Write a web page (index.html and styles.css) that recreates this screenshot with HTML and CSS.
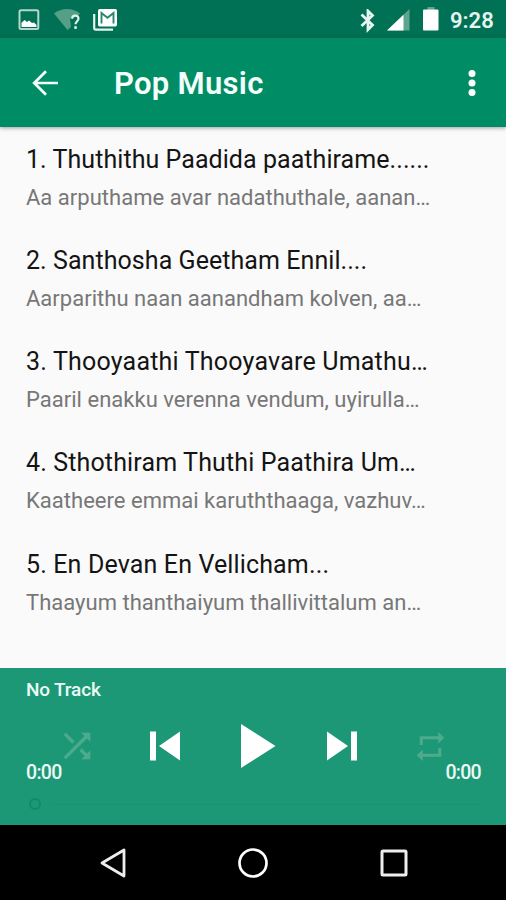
FILE: index.html
```html
<!DOCTYPE html>
<html lang="en">
<head>
<meta charset="utf-8">
<title>Pop Music</title>
<link rel="stylesheet" href="styles.css">
</head>
<body>
<div class="screen">
  <div class="status">
    <div class="status-left">
      <svg width="22" height="22" viewBox="0 0 22 22"><rect x="1.5" y="1.2" width="18.800" height="18.800" rx="1.500" fill="none" stroke="#b5d8cc" stroke-width="2"/><path d="M3.500 18v-4.200l3-2.800 2.500 2 2-1.500 3 2.500 2-.5 2.500 2.500v2z" fill="#fff"/></svg>
      <svg class="wifi" width="27" height="22" viewBox="0 0 27 22"><path d="M0 4.500C7-1.500 19-1.500 26 4.500L24 7h-5l-3 3 1 8-3.500 3z" fill="#559f86"/><path d="M18.200 9.700c0-4 6.300-4 6.300-.2 0 2.700-3 2.700-3 5.800" fill="none" stroke="#e4f2ed" stroke-width="2.200"/><rect x="20.300" y="17.200" width="2.500" height="2.700" fill="#e4f2ed"/></svg>
      <svg class="mail" width="25" height="22" viewBox="0 0 25 22"><path d="M1.200 5v14q0 1.700 1.700 1.700H20" fill="none" stroke="#e4f2ed" stroke-width="2.200"/><rect x="5" y="0" width="19" height="17.500" rx="1.700" fill="#fff"/><path d="M8.500 14.500V4l6 4.800L20.500 4v10.500" fill="none" stroke="#29866c" stroke-width="1.900"/></svg>
    </div>
    <div class="status-right">
      <svg width="16" height="24" viewBox="0 0 16 24"><path d="M1.500 5.500L12.500 16 8 20.500V2l4.500 4.500L1.500 17" fill="none" stroke="#e8f4f0" stroke-width="2.800"/></svg>
      <svg class="signal" width="23" height="22" viewBox="0 0 23 22"><path d="M22.500 0v21.500H0z" fill="#5da58d"/><path d="M16.500 5.800v15.700H0z" fill="#fff"/></svg>
      <svg class="battery" width="16" height="24" viewBox="0 0 16 24"><path d="M4.500 0h7v3h-7z" fill="#5da58d"/><rect x="0" y="2.500" width="15.500" height="21" rx="1" fill="#fff"/></svg>
      <span class="clock">9:28</span>
    </div>
  </div>
  <header class="appbar">
    <svg width="28" height="28" viewBox="0 0 28 28"><path d="M27 14H3.500M15 2.200L3.200 14 15 25.800" fill="none" stroke="#f4fffb" stroke-width="2.700"/></svg>
    <h1 class="heading">Pop Music</h1>
    <svg class="more" width="8" height="28" viewBox="0 0 8 28"><g fill="#fff"><circle cx="4" cy="4.500" r="3.500"/><circle cx="4" cy="14" r="3.500"/><circle cx="4" cy="23.500" r="3.500"/></g></svg>
  </header>
  <main class="list">
    <div class="row"><div class="title">1. Thuthithu Paadida paathirame......</div><div class="sub">Aa arputhame avar nadathuthale, aanan…</div></div>
    <div class="row"><div class="title">2. Santhosha Geetham Ennil....</div><div class="sub">Aarparithu naan aanandham kolven, aa…</div></div>
    <div class="row"><div class="title">3. Thooyaathi Thooyavare Umathu…</div><div class="sub">Paaril enakku verenna vendum, uyirulla…</div></div>
    <div class="row"><div class="title">4. Sthothiram Thuthi Paathira Um…</div><div class="sub">Kaatheere emmai karuththaaga, vazhuv…</div></div>
    <div class="row"><div class="title">5. En Devan En Vellicham...</div><div class="sub">Thaayum thanthaiyum thallivittalum an…</div></div>
  </main>
  <section class="player">
    <div class="track">No Track</div>
    <div class="controls">
      <svg width="40" height="40" viewBox="0 0 24 24"><path d="M10.590 9.170L5.410 4 4 5.410l5.170 5.170 1.420-1.410zM14.500 4l2.040 2.040L4 18.590 5.410 20 17.960 7.460 20 9.500V4h-5.500zm.33 9.410l-1.410 1.410 3.130 3.130L14.500 20H20v-5.500l-2.040 2.040-3.130-3.130z" fill="#4dab8c"/></svg>
      <svg class="prev" width="30" height="30" viewBox="0 0 30 30"><path d="M0 .5h6v29H0zM30 .5v29L9 15z" fill="#fff"/></svg>
      <svg class="play" width="36" height="46" viewBox="0 0 36 46"><path d="M1 1l34.500 22L1 45z" fill="#fff"/></svg>
      <svg class="next" width="30" height="30" viewBox="0 0 30 30"><path d="M24 .5h6v29h-6zM0 .5v29L21 15z" fill="#fff"/></svg>
      <svg class="repeat" width="37" height="35" viewBox="0 0 24 24" preserveAspectRatio="none"><path d="M7 7h10v3l4-4-4-4v3H5v6h2V7zm10 10H7v-3l-4 4 4 4v-3h12v-6h-2v4z" fill="#4dab8c"/></svg>
    </div>
    <div class="times"><span>0:00</span><span>0:00</span></div>
    <div class="seek"><span class="thumb"></span><span class="rail"></span></div>
  </section>
  <nav class="nav">
    <svg width="28" height="32" viewBox="0 0 28 32"><path d="M25 3v26L3 16z" fill="none" stroke="#eee" stroke-width="2.800" stroke-linejoin="round"/></svg>
    <svg class="home" width="32" height="32" viewBox="0 0 32 32"><circle cx="16" cy="16" r="13.500" fill="none" stroke="#fff" stroke-width="2.700"/></svg>
    <svg width="28" height="28" viewBox="0 0 28 28"><rect x="2" y="2" width="24" height="24" rx="1" fill="none" stroke="#eee" stroke-width="3"/></svg>
  </nav>
</div>
</body>
</html>
```
FILE: styles.css
```css
* { box-sizing: border-box; }
body { margin: 0; font-family: Roboto, sans-serif; }
svg { display: block; flex: none; }
.screen { width: 506px; height: 900px; display: flex; flex-direction: column; overflow: hidden; background: #fafafa; }
.status { height: 38px; flex: none; display: flex; justify-content: space-between; padding: 9px 12px 0 18px; background: #007155; }
.status-left, .status-right { display: flex; align-items: flex-start; }
.wifi { margin-left: 14px; }
.mail { margin-left: 12px; }
.signal { margin-left: 11px; }
.battery { margin: -2px 11px 0 13px; }
.clock { width: 44px; padding-top: 1px; font-size: 22px; line-height: 22px; font-weight: 600; color: #e6f5ef; white-space: nowrap; }
.appbar { height: 89px; flex: none; display: flex; align-items: center; padding: 0 30px 0 31px; background: #008d66; box-shadow: 0 1px 4px rgba(60, 30, 50, .45); }
.heading { margin: 2px 0 0 55px; font-size: 31px; line-height: 36px; font-weight: 600; letter-spacing: .3px; color: #f4fffb; }
.more { margin-left: auto; }
.list { flex: 1; padding: 15.800px 26px 0; }
.row { height: 101.2px; white-space: nowrap; }
.title { font-size: 25px; line-height: 34px; letter-spacing: .06px; color: #141414; }
.row:nth-child(3) .title { letter-spacing: .2px; }
.row:nth-child(4) .title, .row:nth-child(5) .title { letter-spacing: .14px; }
.sub { margin-top: 5px; font-size: 22px; line-height: 32px; letter-spacing: .02px; color: #777; }
.player { height: 157px; flex: none; padding: 10px 25px 0 26px; background: #1c9877; color: #ecfaf5; }
.track { font-size: 19px; line-height: 24px; font-weight: 500; letter-spacing: -.15px; }
.controls { height: 46px; margin: 21px 0 0 31px; display: flex; align-items: center; }
.prev { margin-left: 53px; }
.play { margin-left: 60px; }
.next { margin-left: 51px; }
.repeat { margin-left: 55px; }
.times { display: flex; justify-content: space-between; margin-top: -8px; font-size: 19.5px; line-height: 24px; font-weight: 500; letter-spacing: -.7px; }
.seek { display: flex; align-items: center; margin: 13px 0 0 3px; }
.thumb { width: 12px; height: 12px; border: 2px solid #168866; border-radius: 50%; }
.rail { flex: 1; height: 1px; margin-left: 8px; background: #199372; }
.nav { height: 75px; flex: none; display: flex; align-items: center; justify-content: space-between; padding: 1px 98px 0 99px; background: #000; }
.home { margin-left: -2px; }
```
